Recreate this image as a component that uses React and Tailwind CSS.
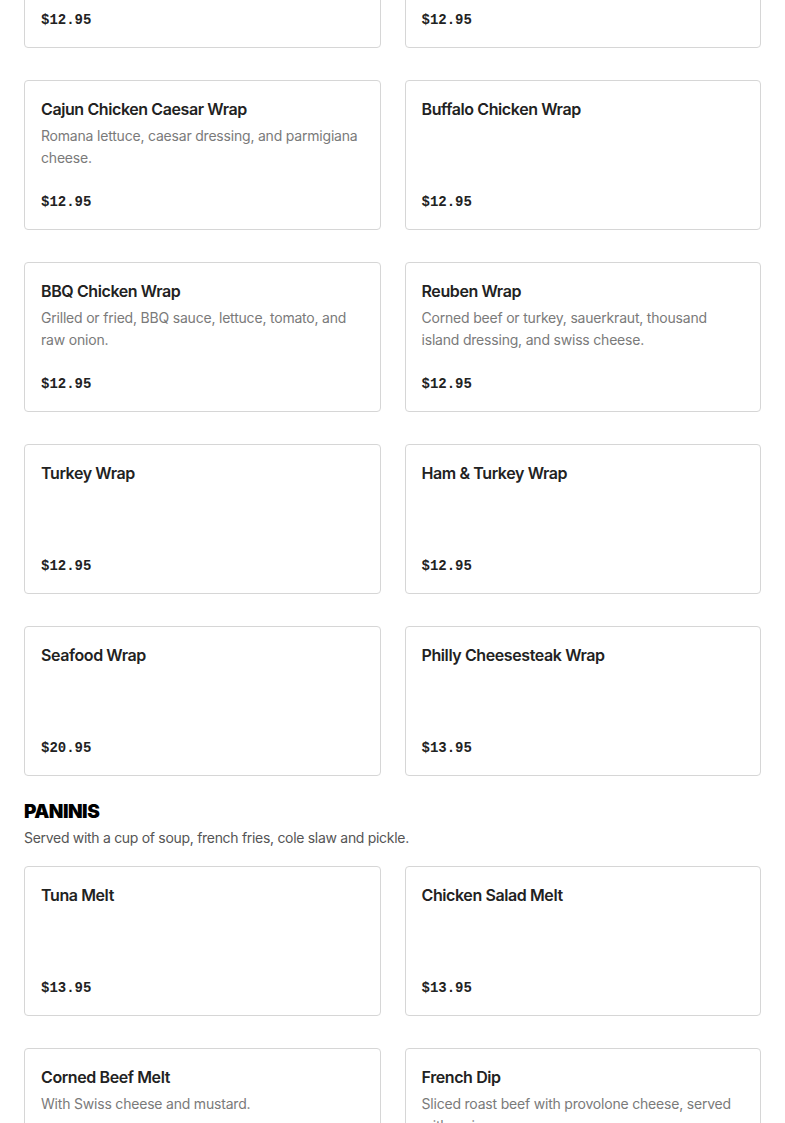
import React from 'react';

const wraps = [
  { name: 'Grilled Chicken Wrap', price: '12.95' },
  { name: 'Chicken Caesar Wrap', price: '12.95' },
  {
    name: 'Cajun Chicken Caesar Wrap',
    desc: 'Romana lettuce, caesar dressing, and parmigiana cheese.',
    price: '12.95',
  },
  { name: 'Buffalo Chicken Wrap', price: '12.95' },
  {
    name: 'BBQ Chicken Wrap',
    desc: 'Grilled or fried, BBQ sauce, lettuce, tomato, and raw onion.',
    price: '12.95',
  },
  {
    name: 'Reuben Wrap',
    desc: 'Corned beef or turkey, sauerkraut, thousand island dressing, and swiss cheese.',
    price: '12.95',
  },
  { name: 'Turkey Wrap', price: '12.95' },
  { name: 'Ham & Turkey Wrap', price: '12.95' },
  { name: 'Seafood Wrap', price: '20.95' },
  { name: 'Philly Cheesesteak Wrap', price: '13.95' },
];

const paninis = [
  { name: 'Tuna Melt', price: '13.95' },
  { name: 'Chicken Salad Melt', price: '13.95' },
  { name: 'Corned Beef Melt', desc: 'With Swiss cheese and mustard.', price: '13.95' },
  {
    name: 'French Dip',
    desc: 'Sliced roast beef with provolone cheese, served with au jus sauce.',
    price: '14.95',
  },
];

function ItemCard({ item }) {
  return (
    <div className="h-[150px] flex flex-col p-4 bg-white border border-[#d6d6d6] rounded-[4px]">
      <h3 className="text-[16px] leading-[24px] font-semibold text-[#222] tracking-[-0.4px]">
        {item.name}
      </h3>
      {item.desc && (
        <p className="text-[14px] leading-[22px] text-[#7a7a7a] tracking-[-0.2px] mt-1">
          {item.desc}
        </p>
      )}
      <div className="mt-auto mb-[-1px] text-[14px] leading-6 font-bold text-[#222] font-['Liberation_Mono',monospace]">
        ${item.price}
      </div>
    </div>
  );
}

export default function App() {
  return (
    <div className="bg-white px-6 font-['Inter',sans-serif] overflow-hidden h-[1123px]">
      {/* Wraps */}
      <div className="grid grid-cols-2 gap-x-6 gap-y-8 mt-[-102px]">
        {wraps.map((item) => (
          <ItemCard key={item.name} item={item} />
        ))}
      </div>

      {/* Paninis */}
      <h2 className="mt-6 text-[19px] leading-6 font-black uppercase text-black tracking-[-0.5px]">
        Paninis
      </h2>
      <p className="mt-[3px] text-[14px] leading-[22px] text-[#555] tracking-[-0.3px]">
        Served with a cup of soup, french fries, cole slaw and pickle.
      </p>
      <div className="grid grid-cols-2 gap-x-6 gap-y-8 mt-[17px]">
        {paninis.map((item) => (
          <ItemCard key={item.name} item={item} />
        ))}
      </div>
    </div>
  );
}
